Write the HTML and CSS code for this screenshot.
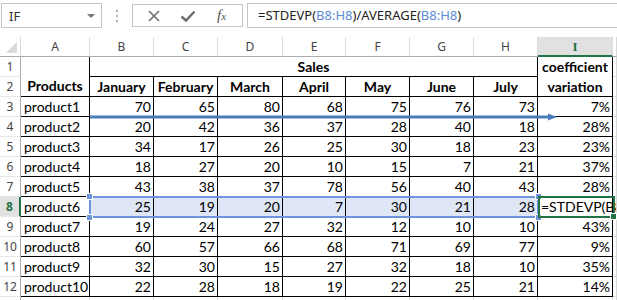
FILE: index.html
```html
<!DOCTYPE html>
<html lang="en">
<head>
  <meta charset="UTF-8" />
  <title>coefficient variation</title>
  <link rel="stylesheet" href="styles.css">
</head>
<body>

  <!-- Barra de fórmulas -->
  <div class="formula-bar">
    <div class="name-box">
      <span>IF</span>
      <span class="drop"></span>
    </div>
    <div class="grip"><i></i><i></i><i></i></div>
    <div class="fx-buttons">
      <svg width="14" height="14" viewBox="0 0 14 14"><path d="M2 2 L12 12 M12 2 L2 12" stroke="#6d6d6d" stroke-width="1.6" fill="none"/></svg>
      <svg width="16" height="14" viewBox="0 0 16 14"><path d="M1.5 7.5 L6 11.5 L14.5 2.5" stroke="#6d6d6d" stroke-width="2.4" fill="none"/></svg>
      <span class="fx">f<small>x</small></span>
    </div>
    <div class="formula-input">=STDEVP(<span class="ref">B8:H8</span>)/AVERAGE(<span class="ref">B8:H8</span>)</div>
  </div>

  <!-- Planilha -->
  <div class="sheet">
    <div class="grid" id="grid">
      <div class="ch corner"></div>
      <div class="ch">A</div>
      <div class="ch">B</div>
      <div class="ch">C</div>
      <div class="ch">D</div>
      <div class="ch">E</div>
      <div class="ch">F</div>
      <div class="ch">G</div>
      <div class="ch">H</div>
      <div class="ch ch-active">I</div>
      <div class="ch"></div>

      <div class="rh">1</div>
      <div class="c head products">Products</div>
      <div class="c head sales">Sales</div>
      <div class="c head coef">coefficient<br>variation</div>
      <div class="e"></div>

      <div class="rh">2</div>
      <div class="c head">January</div>
      <div class="c head">February</div>
      <div class="c head">March</div>
      <div class="c head">April</div>
      <div class="c head">May</div>
      <div class="c head">June</div>
      <div class="c head">July</div>
      <div class="e"></div>
    </div>

    <div class="selection">
      <span class="h tl"></span><span class="h bl"></span>
      <span class="h tr"></span><span class="h br"></span>
    </div>
    <div class="active-cell"><span class="h-green"></span></div>

    <svg class="arrow" width="480" height="12" viewBox="0 0 480 12">
      <line x1="0" y1="6" x2="460" y2="6" stroke="#4a7ebb" stroke-width="3"/>
      <path d="M458 2.5 L467 6 L458 9.5 Z" fill="#4a7ebb"/>
    </svg>
  </div>

  <script>
    const dados = [
      ["product1", 70, 65, 80, 68, 75, 76, 73, "7%"],
      ["product2", 20, 42, 36, 37, 28, 40, 18, "28%"],
      ["product3", 34, 17, 26, 25, 30, 18, 23, "23%"],
      ["product4", 18, 27, 20, 10, 15, 7, 21, "37%"],
      ["product5", 43, 38, 37, 78, 56, 40, 43, "28%"],
      ["product6", 25, 19, 20, 7, 30, 21, 28, "=STDEVP(B8"],
      ["product7", 19, 24, 27, 32, 12, 10, 10, "43%"],
      ["product8", 60, 57, 66, 68, 71, 69, 77, "9%"],
      ["product9", 32, 30, 15, 27, 32, 18, 10, "35%"],
      ["product10", 22, 28, 18, 19, 22, 25, 21, "14%"],
    ];

    const grid = document.getElementById("grid");
    let html = "";
    dados.forEach((linha, i) => {
      const num = i + 3;
      const sel = num === 8;
      html += `<div class="rh${sel ? " rh-active" : ""}">${num}</div>`;
      html += `<div class="c name">${linha[0]}</div>`;
      for (let j = 1; j <= 7; j++) {
        html += `<div class="c num${sel ? " sel" : ""}">${linha[j]}</div>`;
      }
      html += sel
        ? `<div class="c edit">${linha[8]}</div>`
        : `<div class="c num">${linha[8]}</div>`;
      html += `<div class="e"></div>`;
    });
    // linha seguinte (cortada pela borda)
    html += `<div class="rh"></div>`;
    for (let j = 0; j < 10; j++) html += `<div class="e"></div>`;
    grid.insertAdjacentHTML("beforeend", html);
  </script>
</body>
</html>
```

FILE: styles.css
```css
body {
  margin: 0;
  background-color: #fff;
  font-family: Lato, "Liberation Sans", sans-serif;
  overflow: hidden;
}

/* Barra de fórmulas */
.formula-bar {
  display: flex;
  align-items: flex-start;
  height: 37px;
  padding-top: 3px;
  box-sizing: border-box;
  font-family: "Noto Sans", "Open Sans", sans-serif;
  color: #222;
}

.name-box {
  display: flex;
  align-items: center;
  justify-content: space-between;
  margin-left: 1px;
  width: 101px;
  height: 25px;
  box-sizing: border-box;
  border: 1px solid #c6c6c6;
  padding: 0 6px 0 7px;
  font-size: 13px;
  color: #333;
}

.drop {
  width: 0;
  height: 0;
  border-left: 4px solid transparent;
  border-right: 4px solid transparent;
  border-top: 4px solid #777;
}

.grip {
  display: flex;
  flex-direction: column;
  gap: 3px;
  width: 30px;
  align-items: center;
  padding-top: 7px;
}

.grip i {
  display: block;
  width: 2px;
  height: 2px;
  background-color: #b0b0b0;
}

.fx-buttons {
  display: flex;
  align-items: center;
  gap: 19px;
  margin-top: 1px;
  width: 111px;
  height: 23px;
  box-sizing: border-box;
  border: 1px solid #c6c6c6;
  padding-left: 14px;
}

.fx {
  font-family: "Liberation Serif", serif;
  font-style: italic;
  font-size: 15px;
  color: #555;
  margin-left: 2px;
}

.fx small {
  font-size: 11px;
}

.formula-input {
  flex: 1;
  margin-left: 4px;
  height: 25px;
  box-sizing: border-box;
  border: 1px solid #c6c6c6;
  border-right: none;
  padding-left: 10px;
  line-height: 23px;
  font-size: 13px;
  white-space: nowrap;
}

.ref {
  color: #5b8dd9;
}

/* Planilha */
.sheet {
  position: relative;
}

.grid {
  display: grid;
  grid-template-columns: 21px 69px 64px 64px 65px 63px 64px 64px 64px 75px 1fr;
  grid-auto-rows: 20px;
}

.ch {
  box-sizing: border-box;
  border-right: 1px solid #dadada;
  border-bottom: 1px solid #ababab;
  text-align: center;
  font-family: "Noto Sans", "Open Sans", sans-serif;
  font-size: 12px;
  line-height: 19px;
  color: #444;
}

.corner {
  position: relative;
}

.corner::after {
  content: "";
  position: absolute;
  right: 3px;
  bottom: 3px;
  border-left: 11px solid transparent;
  border-bottom: 11px solid #dadada;
}

.ch-active {
  background-color: #e1e1e1;
  border-bottom: 2px solid #217346;
  color: #217346;
  font-family: "Liberation Serif", serif;
  font-weight: bold;
  font-size: 13px;
}

.rh {
  box-sizing: border-box;
  border-right: 1px solid #ababab;
  border-bottom: 1px solid #e6e6e6;
  text-align: center;
  font-family: "Noto Sans", "Open Sans", sans-serif;
  font-size: 12px;
  line-height: 19px;
  color: #444;
}

.rh-active {
  background-color: #e1e1e1;
  color: #217346;
  font-weight: bold;
  border-right: 2px solid #217346;
}

.c {
  box-sizing: border-box;
  border-right: 1px solid #000;
  border-bottom: 1px solid #000;
  font-size: 14px;
  line-height: 20px;
  color: #000;
  white-space: nowrap;
  overflow: hidden;
}

.e {
  box-sizing: border-box;
  border-right: 1px solid #dadada;
  border-bottom: 1px solid #dadada;
}

.head {
  font-weight: bold;
  text-align: center;
}

.products {
  grid-row: span 2;
  display: flex;
  align-items: flex-end;
  justify-content: center;
}

.sales {
  grid-column: span 7;
}

.coef {
  grid-row: span 2;
  line-height: 20px;
}

.name {
  padding-left: 3px;
}

.num {
  text-align: right;
  padding-right: 2px;
}

.sel {
  background-color: #dfe6f6;
}

.edit {
  padding-left: 3px;
  overflow: visible;
}

/* Seleção B8:H8 */
.selection {
  position: absolute;
  left: 89px;
  top: 159px;
  width: 450px;
  height: 22px;
  box-sizing: border-box;
  border: 2px solid #7094dc;
}

.h {
  position: absolute;
  width: 5px;
  height: 5px;
  background-color: #7094dc;
  border: 1px solid #fff;
}

.tl { left: -5px; top: -5px; }
.bl { left: -5px; bottom: -5px; }
.tr { right: -5px; top: -5px; }
.br { right: -5px; bottom: -5px; }

.active-cell {
  position: absolute;
  left: 538px;
  top: 159px;
  width: 77px;
  height: 22px;
  box-sizing: border-box;
  border: 2px solid #217346;
}

.h-green {
  position: absolute;
  right: -4px;
  bottom: -4px;
  width: 5px;
  height: 5px;
  background-color: #217346;
  border: 1px solid #fff;
}

.arrow {
  position: absolute;
  left: 90px;
  top: 74px;
}
```
